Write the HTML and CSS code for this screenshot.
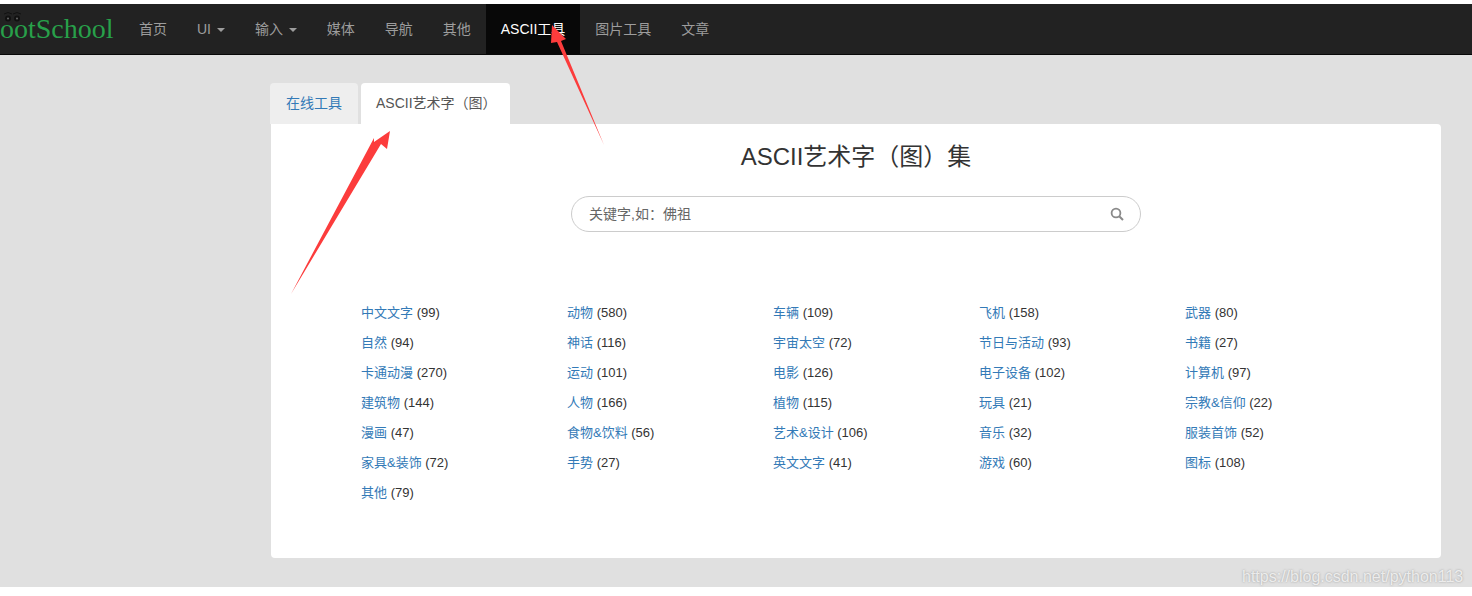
FILE: index.html
```html
<!DOCTYPE html>
<html lang="zh">
<head>
    <meta charset="UTF-8">
    <title>ASCII艺术字（图）集</title>
    <link rel="stylesheet" href="styles.css">
</head>
<body>
    <div class="page">
        <nav class="navbar">
            <a class="brand">
                <svg class="brand-eyes" width="20" height="12" viewBox="0 0 20 12">
                    <path d="M2 3 Q6 0 10 3 M11 3 Q15 0 19 3" fill="none" stroke="#111" stroke-width="1"/>
                    <circle cx="6" cy="7.5" r="3" fill="#111"/>
                    <circle cx="15" cy="7.5" r="3" fill="#111"/>
                    <circle cx="6" cy="7.5" r="1" fill="#666"/>
                    <circle cx="15" cy="7.5" r="1" fill="#666"/>
                </svg>
                ootSchool
            </a>
            <ul class="nav">
                <li><a>首页</a></li>
                <li><a>UI <span class="caret"></span></a></li>
                <li><a>输入 <span class="caret"></span></a></li>
                <li><a>媒体</a></li>
                <li><a>导航</a></li>
                <li><a>其他</a></li>
                <li class="active"><a>ASCII工具</a></li>
                <li><a>图片工具</a></li>
                <li><a>文章</a></li>
            </ul>
        </nav>

        <div class="container">
            <ul class="tabs">
                <li><a>在线工具</a></li>
                <li class="active"><a>ASCII艺术字（图）</a></li>
            </ul>
            <div class="card">
                <h1>ASCII艺术字（图）集</h1>
                <div class="search">
                    <span class="search-text">关键字,如：佛祖</span>
                    <svg class="search-icon" width="14" height="14" viewBox="0 0 14 14">
                        <circle cx="6" cy="6" r="4.4" fill="none" stroke="#8a8a8a" stroke-width="1.8"/>
                        <path d="M9.2 9.2 L13 13" stroke="#8a8a8a" stroke-width="2"/>
                    </svg>
                </div>
                <div class="cats">
                    <div><a>中文文字</a> (99)</div>
                    <div><a>动物</a> (580)</div>
                    <div><a>车辆</a> (109)</div>
                    <div><a>飞机</a> (158)</div>
                    <div><a>武器</a> (80)</div>
                    <div><a>自然</a> (94)</div>
                    <div><a>神话</a> (116)</div>
                    <div><a>宇宙太空</a> (72)</div>
                    <div><a>节日与活动</a> (93)</div>
                    <div><a>书籍</a> (27)</div>
                    <div><a>卡通动漫</a> (270)</div>
                    <div><a>运动</a> (101)</div>
                    <div><a>电影</a> (126)</div>
                    <div><a>电子设备</a> (102)</div>
                    <div><a>计算机</a> (97)</div>
                    <div><a>建筑物</a> (144)</div>
                    <div><a>人物</a> (166)</div>
                    <div><a>植物</a> (115)</div>
                    <div><a>玩具</a> (21)</div>
                    <div><a>宗教&amp;信仰</a> (22)</div>
                    <div><a>漫画</a> (47)</div>
                    <div><a>食物&amp;饮料</a> (56)</div>
                    <div><a>艺术&amp;设计</a> (106)</div>
                    <div><a>音乐</a> (32)</div>
                    <div><a>服装首饰</a> (52)</div>
                    <div><a>家具&amp;装饰</a> (72)</div>
                    <div><a>手势</a> (27)</div>
                    <div><a>英文文字</a> (41)</div>
                    <div><a>游戏</a> (60)</div>
                    <div><a>图标</a> (108)</div>
                    <div><a>其他</a> (79)</div>
                </div>
            </div>
        </div>
    </div>

    <!-- annotation arrows drawn over the screenshot -->
    <svg class="arrows" width="1472" height="596" viewBox="0 0 1472 596">
        <polygon points="552,25 566,39 561,41 604,145 557,42 551,43" fill="#fc3c3c"/>
        <polygon points="390,131 387,149 381,144 291,294 374,138 374,142" fill="#fc3c3c"/>
    </svg>
    <div class="watermark">https://blog.csdn.net/python113</div>
</body>
</html>
```

FILE: styles.css
```css
* {
    margin: 0;
    padding: 0;
    box-sizing: border-box;
}

body {
    font-family: "Liberation Sans", "Noto Sans CJK SC", sans-serif;
    font-size: 14px;
    line-height: 20px;
    color: #333;
    background: white;
    padding-top: 4px;
    height: 596px;
    overflow: hidden;
    position: relative;
}

ul {
    list-style: none;
}

.page {
    background: #e0e0e0;
    height: 583px;
}

.navbar {
    display: flex;
    height: 51px;
    background: #222;
    border-bottom: 1px solid #080808;
}

.brand {
    position: relative;
    width: 124px;
    padding-top: 9px;
    font-family: "Liberation Serif", serif;
    font-size: 28px;
    line-height: 32px;
    color: #28a04a;
    white-space: nowrap;
}

.brand-eyes {
    position: absolute;
    left: 2px;
    top: 7px;
}

.nav {
    display: flex;
}

.nav a {
    display: block;
    padding: 15px;
    color: #9d9d9d;
}

.nav .active a {
    background: #080808;
    color: white;
}

.caret {
    display: inline-block;
    width: 0;
    height: 0;
    margin-left: 2px;
    vertical-align: middle;
    border-top: 4px solid;
    border-left: 4px solid transparent;
    border-right: 4px solid transparent;
}

.container {
    width: 1172px;
    margin-left: 270px;
    padding-top: 28px;
}

.tabs {
    display: flex;
    gap: 3px;
    height: 41px;
}

.tabs a {
    display: block;
    height: 41px;
    padding: 10px 16px;
    background: #eee;
    border-radius: 4px 4px 0 0;
    color: #337ab7;
}

.tabs .active a {
    background: white;
    color: #555;
    padding: 10px 15px;
    width: 149px;
    white-space: nowrap;
}

.card {
    height: 434px;
    margin-left: 1px;
    width: 1170px;
    background: white;
    border-radius: 0 4px 4px 4px;
    padding-top: 16px;
}

h1 {
    font-size: 24px;
    font-weight: 400;
    line-height: 34px;
    text-align: center;
    color: #333;
}

.search {
    display: flex;
    align-items: center;
    justify-content: space-between;
    width: 570px;
    height: 36px;
    margin: 22px auto 0;
    padding: 0 16px 0 17px;
    border: 1px solid #ccc;
    border-radius: 18px;
    color: #666;
}

.cats {
    display: grid;
    grid-template-columns: repeat(5, 206px);
    grid-auto-rows: 30px;
    margin: 66px 0 0 90px;
    font-size: 13px;
}

.cats div {
    line-height: 30px;
    white-space: nowrap;
}

.cats a {
    color: #337ab7;
}

.arrows {
    position: absolute;
    left: 0;
    top: 0;
    pointer-events: none;
}

.watermark {
    position: absolute;
    left: 1242px;
    top: 567px;
    font-size: 16px;
    color: rgba(255,255,255,0.75);
    text-shadow: 0 0 2px rgba(120,120,120,0.7);
    white-space: nowrap;
}
```
